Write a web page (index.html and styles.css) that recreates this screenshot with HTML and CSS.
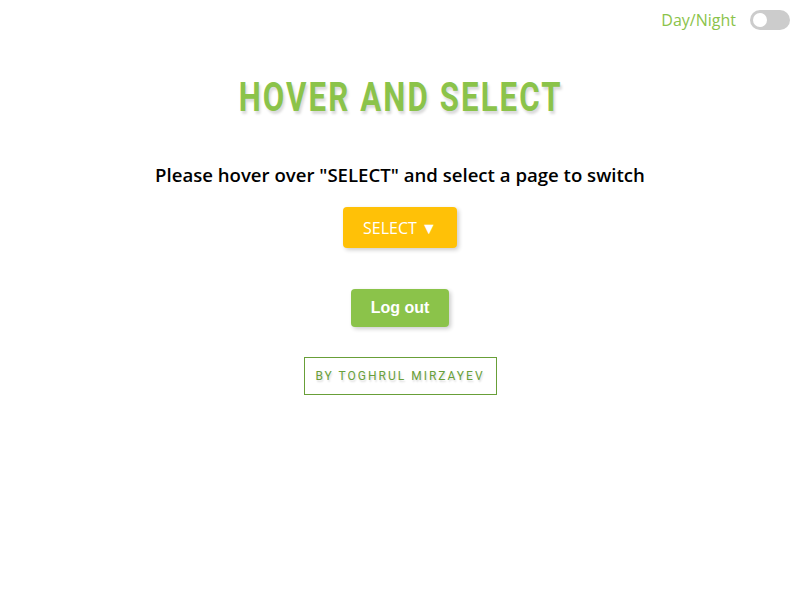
FILE: index.html
```html
<!DOCTYPE html>
<html>
<head>
<meta charset="utf-8">
<link rel="stylesheet" href="styles.css">
</head>
<body>
<header class="topbar">
  <span class="mode-label">Day/Night</span>
  <span class="switch"><span class="knob"></span></span>
</header>
<main class="content">
  <h1 class="title">HOVER AND SELECT</h1>
  <p class="hint">Please hover over "SELECT" and select a page to switch</p>
  <button class="select-btn">SELECT ▼</button>
  <button class="logout-btn">Log out</button>
  <div class="author">BY TOGHRUL MIRZAYEV</div>
</main>
</body>
</html>
```
FILE: styles.css
```css
html, body { margin: 0; padding: 0; background: #fff; }
body { width: 800px; height: 600px; font-family: "Open Sans", sans-serif; }
.topbar {
  display: flex; justify-content: flex-end; align-items: center;
  height: 40px; padding-right: 10px; gap: 14px;
}
.mode-label { color: #8bc34a; font-size: 16px; font-weight: 500; }
.switch {
  width: 40px; height: 20px; border-radius: 10px; background: #ccc;
  display: flex; align-items: center; padding-left: 3px; box-sizing: border-box;
}
.knob { width: 14px; height: 14px; border-radius: 50%; background: #fff; }
.content { display: flex; flex-direction: column; align-items: center; }
.title {
  margin: 34px 0 0 2px; font-family: Roboto, sans-serif; font-weight: 700;
  font-size: 40px; line-height: 48px; color: #8bc34a; letter-spacing: 2.7px;
  transform: scaleX(0.78);
  text-shadow: 2px 3px 3px rgba(0,0,0,0.15);
}
.hint {
  margin: 40px 0 0; font-size: 18.6px; font-weight: 600; color: #000; line-height: 26px;
}
.select-btn {
  margin-top: 19px; width: 114px; height: 41px; border: none; border-radius: 4px;
  background: #ffc107; color: #fff; font-family: "Open Sans", sans-serif; font-weight: 500;
  font-size: 16px; box-shadow: 2px 2px 4px rgba(0,0,0,0.2); padding: 0;
}
.logout-btn {
  margin-top: 41px; width: 98px; height: 38px; border: none; border-radius: 4px;
  background: #8bc34a; color: #fff; font-family: "Liberation Sans", Arial, sans-serif;
  font-weight: 700; font-size: 16px; box-shadow: 2px 2px 4px rgba(0,0,0,0.2); padding: 0;
}
.author {
  margin-top: 30px; width: 193px; height: 38px; box-sizing: border-box;
  border: 1px solid #689f38; color: #689f38; font-family: Roboto, sans-serif; font-weight: 400;
  font-size: 12px; letter-spacing: 2px; display: flex; align-items: center; justify-content: center;
  text-shadow: 1px 2px 2px rgba(0,0,0,0.15);
}
```
